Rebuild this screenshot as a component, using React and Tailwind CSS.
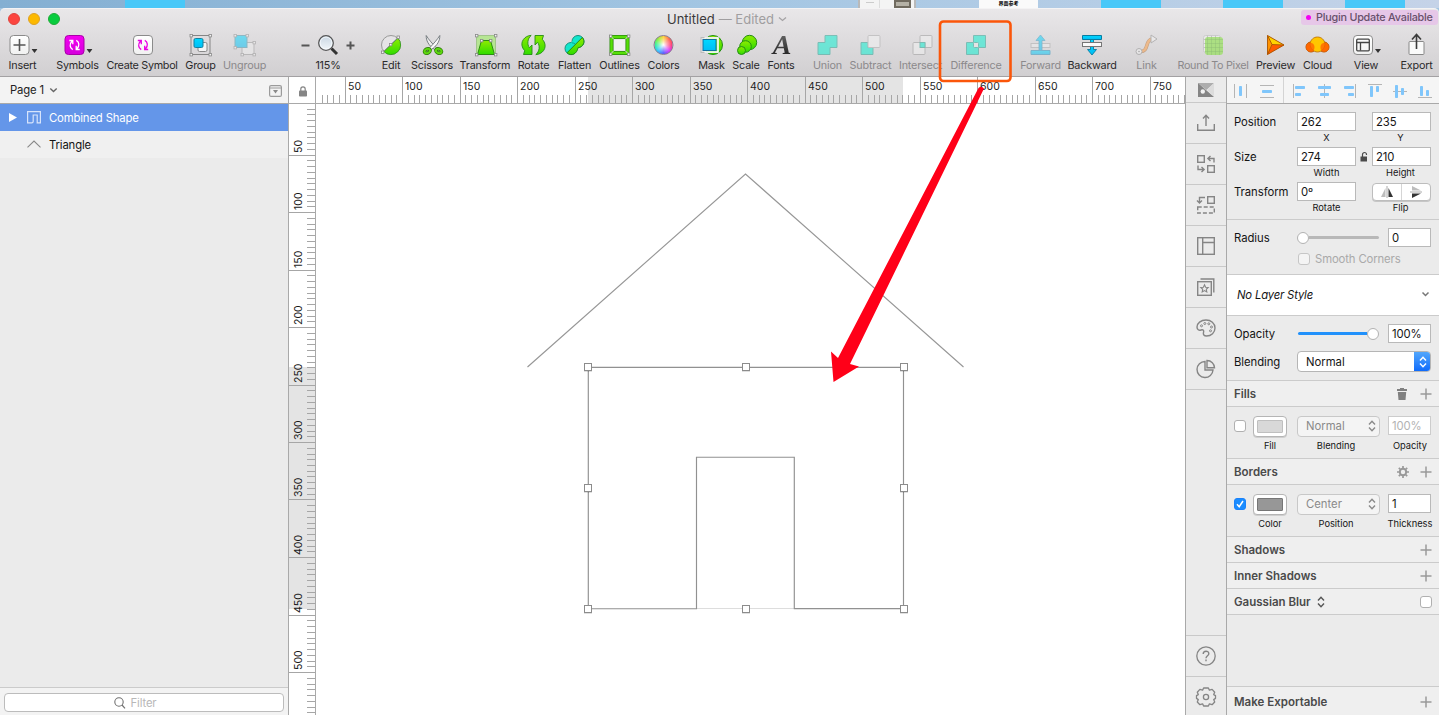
import React from "react";

const Svg = ({ w = 24, h = 24, className = "", children }) => (
  <svg width={w} height={h} viewBox={`0 0 ${w} ${h}`} fill="none" className={`shrink-0 overflow-visible ${className}`}>
    {children}
  </svg>
);

const Defs = () => (
  <svg width="0" height="0" className="absolute">
    <defs>
      <linearGradient id="green" x1="0" y1="0" x2="0" y2="1"><stop offset="0" stopColor="#8eec00" /><stop offset="1" stopColor="#2fdc00" /></linearGradient>
      <linearGradient id="blue" x1="0" y1="0" x2="0" y2="1"><stop offset="0" stopColor="#00d8ff" /><stop offset="1" stopColor="#00bdf5" /></linearGradient>
      <linearGradient id="paper" x1="0" y1="0" x2="0" y2="1"><stop offset="0" stopColor="#ffffff" /><stop offset="1" stopColor="#f1f1f1" /></linearGradient>
      <linearGradient id="pink" x1="0" y1="0" x2="0" y2="1"><stop offset="0" stopColor="#f400f0" /><stop offset="1" stopColor="#d400dc" /></linearGradient>
      <linearGradient id="ink" x1="0" y1="0" x2="0" y2="1"><stop offset="0" stopColor="#6a6a6a" /><stop offset="1" stopColor="#222" /></linearGradient>
      <linearGradient id="glass" x1="0" y1="0" x2="0" y2="1"><stop offset="0" stopColor="#c9d6e2" /><stop offset="1" stopColor="#f2f7fb" /></linearGradient>
    </defs>
  </svg>
);

const Corner = ({ x, y }) => <rect x={x - 1} y={y - 1} width="2.4" height="2.4" fill="#f4f4f4" stroke="#888" strokeWidth=".8" />;
const Tile = ({ fill = "url(#paper)", stroke = "#8b8b8b" }) => <rect x="2.5" y="2.5" width="19" height="19" rx="3.5" fill={fill} stroke={stroke} />;
const Cycle = ({ color }) => (
  <g stroke={color} strokeWidth="1.3">
    <path d="M10.200 16.600C7.300 15 6.600 11.300 9.600 8M6.800 7.500h3.500v3.700" />
    <path d="M13.800 7.400c2.900 1.600 3.600 5.300.6 8.600M17.200 16.500h-3.500v-3.700" />
  </g>
);

const icons = {
  insert: <Svg><Tile /><path d="M12 6v12M6 12h12" stroke="#555" strokeWidth="1.6" /></Svg>,
  symbols: <Svg><Tile fill="url(#pink)" stroke="#a800a8" /><Cycle color="#fff" /></Svg>,
  create: <Svg><Tile /><Cycle color="#ea00e4" /></Svg>,
  group: <Svg><rect x="2.500" y="2.500" width="19" height="19" stroke="#858585" /><rect x="9.5" y="9.5" width="9" height="9" rx="1.5" fill="#f4f4f4" stroke="#888" /><rect x="5.5" y="5.5" width="9" height="9" rx="1.5" fill="url(#blue)" stroke="#1481a0" /><Corner x={2.5} y={2.5} /><Corner x={21.5} y={2.5} /><Corner x={2.5} y={21.5} /><Corner x={21.5} y={21.5} /></Svg>,
  ungroup: <Svg><rect x="9.5" y="9.5" width="12" height="12" fill="#eee" stroke="#999" /><rect x="2.5" y="2.5" width="12" height="12" fill="url(#blue)" stroke="#3b93aa" />{[[2.5, 2.5], [14.5, 2.5], [2.5, 14.5], [21.5, 9.5], [9.5, 21.5], [21.5, 21.5]].map(([x, y]) => <Corner key={`${x}-${y}`} x={x} y={y} />)}</Svg>,
  edit: <Svg><circle cx="12" cy="12" r="9.5" fill="#e6e4e6" stroke="#999" /><path d="M19 5.2A9.5 9.5 0 1 1 4.8 18.5Z" fill="url(#green)" stroke="#2b9a12" strokeWidth=".8" /><path d="M19 4.5 3.5 19.5" stroke="#888" strokeWidth=".8" /><Corner x={19} y={4} /><Corner x={11.5} y={11.5} /><Corner x={3.5} y={19} /></Svg>,
  scissors: <Svg><path d="M5.2 2.500c-.2 4.800 2.200 10 8.500 14l1.400-2C11.700 11 8 7 5.200 2.500Z" fill="#eee" stroke="#6d7478" strokeWidth=".9" /><path d="M18.800 2.500c.2 4.800-2.200 10-8.500 14l-1.400-2C12.300 11 16 7 18.800 2.500Z" fill="#fafafa" stroke="#6d7478" strokeWidth=".9" /><ellipse cx="6.3" cy="18" rx="2.9" ry="2" transform="rotate(-25 6.3 18)" stroke="#2f7a0b" strokeWidth="3.6" /><ellipse cx="17.7" cy="18" rx="2.9" ry="2" transform="rotate(25 17.7 18)" stroke="#2f7a0b" strokeWidth="3.6" /><ellipse cx="6.3" cy="18" rx="2.9" ry="2" transform="rotate(-25 6.3 18)" stroke="#5ed810" strokeWidth="2" /><ellipse cx="17.7" cy="18" rx="2.9" ry="2" transform="rotate(25 17.7 18)" stroke="#5ed810" strokeWidth="2" /></Svg>,
  transform: <Svg><rect x="2.500" y="2.500" width="19" height="19" fill="#b6e593" stroke="#a1c58a" /><path d="M7.5 7.5h9L20.5 21.5h-17Z" fill="url(#green)" stroke="#2c8c12" /><Corner x={2.5} y={2.5} /><Corner x={21.5} y={2.5} /><Corner x={7.5} y={7.5} /><Corner x={16.5} y={7.5} /><Corner x={2.5} y={21.5} /><Corner x={21.5} y={21.5} /></Svg>,
  rotate: <Svg><path d="M9.700 2.400C3 2.600-1.700 9 1.300 15c.6 1.200 1.200 2 1.900 2.700L2 21.500h8.500V12l-2.600 2.700C5.500 11.500 5.800 5.500 9.700 2.400Z" fill="url(#green)" stroke="#248c15" strokeWidth=".9" /><path d="M14.300 21.600c6.700-.2 11.400-6.600 8.400-12.600-.6-1.200-1.200-2-1.900-2.700L22 2.500h-8.500V12l2.600-2.700c2.400 3.200 2.100 9.200-1.800 12.300Z" fill="url(#green)" stroke="#248c15" strokeWidth=".9" /></Svg>,
  flatten: <Svg><circle cx="15.500" cy="8.500" r="6" fill="#12e6cb" stroke="#15917f" /><circle cx="8.500" cy="15.500" r="6" fill="#12e6cb" stroke="#15917f" /><path d="M12.500 4.500 5 15l5-1 8-7Z" fill="#12e6cb" /><path d="M9.500 9.800c2.500.3 4 1.500 4.700 3.500" stroke="#15917f" strokeWidth=".8" /><path d="M19.800 4.500c3.500 4 1 9.500-4.300 10.300C14.500 20.500 9.300 24 4.500 19.800Z" fill="url(#green)" stroke="#278b17" /></Svg>,
  outlines: <Svg><rect x="4" y="4" width="16" height="16" stroke="#2f8e10" strokeWidth="4" /><rect x="4" y="4" width="16" height="16" stroke="#57df08" strokeWidth="2.400" /><rect x="6.500" y="6.500" width="11" height="11" fill="#f1f0f1" /><path d="M3 3l3 3M21 3l-3 3M3 21l3-3M21 21l-3-3" stroke="#fff" strokeWidth=".8" />{[[3, 3], [21, 3], [3, 21], [21, 21]].map(([x, y]) => <Corner key={`${x}-${y}`} x={x} y={y} />)}</Svg>,
  colors: (
    <div className="flex h-6 w-6 items-center justify-center">
      <div className="h-5 w-5 rounded-full border border-[#8a7b90] bg-[radial-gradient(circle,#fff_0%,rgba(255,255,255,0.5)_30%,transparent_65%),conic-gradient(from_90deg,#ff3c78,#d83cff,#5a5cff,#32c8ff,#32f0a0,#8cf03c,#ffd23c,#ff6450,#ff3c78)]" />
    </div>
  ),
  mask: <Svg><circle cx="13.5" cy="12" r="9.5" fill="url(#green)" stroke="#248c15" /><rect x="1.5" y="4.5" width="17" height="15" fill="#fff" fillOpacity=".25" stroke="#bbb" /><path d="M5 5h13.5v14H5" stroke="#fff" strokeWidth="1.5" /><rect x="3.5" y="6.5" width="13" height="11" fill="url(#blue)" stroke="#1171a0" /></Svg>,
  scale: <Svg><circle cx="14.5" cy="9.5" r="7.200" fill="url(#green)" stroke="#248c15" /><circle cx="10.5" cy="13.5" r="5.800" fill="url(#green)" stroke="#248c15" /><circle cx="6.5" cy="17.5" r="4" fill="url(#green)" stroke="#248c15" /></Svg>,
  fonts: <div className="flex h-6 w-8 items-center justify-center font-['Liberation_Serif',serif] text-[28px] font-bold italic leading-6"><span className="bg-gradient-to-b from-[#6a6a6a] to-[#222222] bg-clip-text px-[3px] text-transparent">A</span></div>,
  union: <Svg><path d="M9.5 2.5h12v12h-7v7h-12v-12h7Z" fill="#00f0d0" stroke="#1ca18f" /></Svg>,
  subtract: <Svg><path d="M2.5 9.5h7v5h5v7h-12Z" fill="#00f0d0" stroke="#1ca18f" /><rect x="9.5" y="2.5" width="12" height="12" rx="1" fill="#f4f4f4" stroke="#aaa" /></Svg>,
  intersect: <Svg><rect x="9.5" y="2.5" width="12" height="12" rx="1" fill="#f2f2f2" stroke="#999" /><rect x="2.5" y="9.5" width="12" height="12" rx="1" fill="#f2f2f2" stroke="#999" /><rect x="9.5" y="9.5" width="5" height="5" fill="#00f0d0" stroke="#1ca18f" /></Svg>,
  difference: <Svg><path d="M9.5 2.5h12v12h-7v7h-12v-12h7Z" fill="#00f0d0" stroke="#1ca18f" /><rect x="9.5" y="9.5" width="5" height="5" rx="1" fill="#eee" stroke="#1ca18f" /></Svg>,
  forward: <Svg><rect x="2.5" y="10.5" width="19" height="4" fill="#eee" stroke="#aaa" /><path d="M2.5 17.5h19v4h-19Z" fill="url(#blue)" stroke="#2290bd" /><path d="M12 2 16.500 7.500h-3v10h-3v-10H7.500Z" fill="url(#blue)" stroke="#2290bd" strokeWidth=".8" /></Svg>,
  backward: <Svg><path d="M2.5 2.5h19v4h-19Z" fill="url(#blue)" stroke="#087da1" /><path d="M12 22 7.5 16.5H10.500V6.5h3v10h3Z" fill="url(#blue)" stroke="#087da1" strokeWidth=".9" /><rect x="2.5" y="9.5" width="19" height="4" fill="#fafafa" stroke="#777" /></Svg>,
  link: <Svg><path d="M5 18.500c10 1 5-11.500 12.500-12.500" stroke="#a9682c" strokeWidth="3.6" /><path d="M5 18.500c10 1 5-11.500 12.500-12.500" stroke="#ff9a3c" strokeWidth="2.4" /><path d="M16.5 2 22.5 6l-6 4Z" fill="#f4f4f4" stroke="#888" /><circle cx="4.5" cy="18.5" r="3" fill="#f4f4f4" stroke="#888" /><circle cx="4.5" cy="18.5" r=".8" fill="#777" /></Svg>,
  pixel: <Svg><rect x="2.5" y="2.5" width="17" height="17" rx="2" fill="#f4f4f4" stroke="#bbb" /><rect x="4" y="4" width="18" height="18" rx="3" fill="#7be32a" /><path d="M6.5 4v18M10.500 4v18M14.5 4v18M18.5 4v18M4 6.5h18M4 10.5h18M4 14.5h18M4 18.5h18" stroke="#3f9a10" strokeOpacity=".5" strokeWidth=".8" /><path d="M6.500 2.500V4M10.500 2.500V4M14.500 2.500V4M2.500 6.500H4M2.500 10.500H4M2.500 14.500H4" stroke="#aaa" /></Svg>,
  preview: <Svg><path d="M4 2.5 20.5 12 4 21.5Z" fill="#ff9300" /><path d="M4 2.5 20.5 12 8.500 11.500Z" fill="#ffd200" /><path d="M4 21.5 20.5 12 8.500 12Z" fill="#ff5a00" /><path d="M4 2.5 20.5 12 4 21.5Z M4 2.5 8.5 11.5 4 21.5M8.5 11.5 20.5 12" stroke="#a95200" strokeWidth=".9" /></Svg>,
  cloud: <Svg w={26}><circle cx="19.5" cy="14" r="5" fill="#ff9000" stroke="#b85400" /><circle cx="6.5" cy="14" r="5" fill="#ff8500" stroke="#b85400" /><path d="M5.500 11.500C6 1.500 20 1.500 20.500 11.500c-.5 4-3.500 7.500-7.500 7.500s-7-3.500-7.500-7.500Z" fill="#ffc600" stroke="#b86b00" strokeWidth=".8" /><path d="M6.500 9.800c3.500.7 4.500 4.500 2.500 8.200-3 1.500-7 .5-7.500-3-.3-3 2-5.200 5-5.200ZM19.500 9.800c-3.500.7-4.500 4.500-2.500 8.200 3 1.500 7 .5 7.500-3 .3-3-2-5.200-5-5.200Z" fill="#ff5d00" fillOpacity=".75" /></Svg>,
  view: <Svg><Tile /><g stroke="#444" strokeWidth="1.3"><rect x="5.7" y="6.2" width="12.6" height="11.6" rx="1" /><path d="M5.7 9.5h12.6M9.5 9.5v8" /></g></Svg>,
  export: <Svg><rect x="4.5" y="8.5" width="15" height="13" rx="1" fill="#fafafa" stroke="#888" /><path d="M12 16V2M7.5 6.5 12 1.5l4.500 5" stroke="#3b3b3b" strokeWidth="1.6" /></Svg>,
};

const tools = [
  ["insert", "Insert", "ml-[9px] w-[27px]", "-translate-x-[3.5px]", 0, 1],
  ["symbols", "Symbols", "ml-[21px] w-[41px]", "-translate-x-[3.5px]", 0, 1],
  ["create", "Create Symbol", "ml-[9px] w-[70px]", "translate-x-px"],
  ["group", "Group", "ml-[9px] w-[29px]", "-translate-x-[0.5px]"],
  ["ungroup", "Ungroup", "ml-[9px] w-[41px]", "-translate-x-[0.5px]", 1],
  ["zoom", "115%", "ml-[37px] w-[52px]", ""],
  ["edit", "Edit", "ml-[27px] w-[20px]", ""],
  ["scissors", "Scissors", "ml-[11px] w-[40px]", "translate-x-px"],
  ["transform", "Transform", "ml-[9px] w-[48px]", "translate-x-px"],
  ["rotate", "Rotate", "ml-[9px] w-[31px]", "-translate-x-[0.5px]"],
  ["flatten", "Flatten", "ml-[9px] w-[33px]", "-translate-x-[0.5px]"],
  ["outlines", "Outlines", "ml-[9px] w-[39px]", "-translate-x-[0.5px]"],
  ["colors", "Colors", "ml-[9px] w-[31px]", "-translate-x-[0.5px]"],
  ["mask", "Mask", "ml-[20px] w-[25px]", "-translate-x-[0.5px]"],
  ["scale", "Scale", "ml-[9px] w-[26px]", "translate-x-px"],
  ["fonts", "Fonts", "ml-[9px] w-[26px]", "translate-x-px"],
  ["union", "Union", "ml-[20px] w-[27px]", "-translate-x-[0.5px]", 1],
  ["subtract", "Subtract", "ml-[9px] w-[41px]", "-translate-x-[0.5px]", 1],
  ["intersect", "Intersect", "ml-[9px] w-[41px]", "translate-x-[1.5px]", 1],
  ["difference", "Difference", "ml-[10px] w-[50px]", "", 1],
  ["forward", "Forward", "ml-[20px] w-[39px]", "-translate-x-[0.5px]", 1],
  ["backward", "Backward", "ml-[9px] w-[46px]", "", 0],
  ["link", "Link", "ml-[22px] w-[19px]", "-translate-x-[0.5px]", 1],
  ["pixel", "Round To Pixel", "ml-[22px] w-[70px]", "", 1],
  ["preview", "Preview", "ml-[9px] w-[37px]", "-translate-x-[0.5px]"],
  ["cloud", "Cloud", "ml-[10px] w-[27px]", "-translate-x-[0.5px]"],
  ["view", "View", "ml-[24px] w-[22px]", "-translate-x-[3px]", 0, 1],
  ["export", "Export", "ml-[24px] w-[31px]", "-translate-x-[0.5px]"],
];

const ZoomControl = () => (
  <div className="flex w-[54px] items-center justify-between">
    <Svg w={9} h={9}><path d="M.5 4.500h8" stroke="#555" strokeWidth="2" /></Svg>
    <Svg><circle cx="10" cy="10" r="7.3" fill="url(#glass)" stroke="#555" strokeWidth="1.3" /><circle cx="10" cy="10" r="5.9" stroke="#f8fbff" strokeOpacity=".8" /><path d="m15.500 15.500 5.500 5.500" stroke="#333" strokeWidth="3" /></Svg>
    <Svg w={9} h={9}><path d="M.5 4.500h8M4.500.5v8" stroke="#555" strokeWidth="2" /></Svg>
  </div>
);

const Tool = ({ item: [id, label, box, shift, off, menu] }) => (
  <div className={`flex shrink-0 flex-col items-center ${box}`}>
    <div className={`relative flex h-6 items-center ${off ? "opacity-50" : ""} ${shift}`}>
      {id === "zoom" ? <ZoomControl /> : icons[id]}
      {menu ? <svg width="6" height="4" className="absolute -right-[6px] bottom-[4px]"><path d="M0 0h6L3 4Z" fill="#333" /></svg> : null}
    </div>
    <div className={`mt-[1px] whitespace-nowrap text-[10.8px] leading-[15px] ${id === "create" || id === "pixel" ? "tracking-[-0.3px]" : "tracking-[-0.18px]"} ${off ? "text-[#8b898b]" : "text-[#2b2a2b]"}`}>{label}</div>
  </div>
);

const HRuler = () => {
  const ticks = [];
  for (let n = 30; n <= 780; n += 5) {
    const x = Math.floor(287.5 + n * 1.15) - 316;
    const major = n % 50 === 0;
    if (x < 869) ticks.push(<React.Fragment key={n}><rect x={x} y={major ? 0 : 18} width="1" height={major ? 26 : 8} fill="#a6a6a6" />{major && <text x={x + 3} y="13" fontSize="10.5" fill="#1c1c1c">{n}</text>}</React.Fragment>);
  }
  return <svg width="869" height="26" className="block font-['Inter']"><rect x="272" width="315" height="26" fill="#e4e4e4" />{ticks}</svg>;
};

const VRuler = () => {
  const ticks = [];
  for (let n = 10; n <= 535; n += 5) {
    const y = Math.floor(97.5 + n * 1.15) - 104;
    const major = n % 50 === 0;
    ticks.push(<React.Fragment key={n}><rect x={major ? 0 : 18} y={y} width={major ? 26 : 8} height="1" fill="#a6a6a6" />{major && <text transform={`translate(13 ${y - 2}) rotate(-90)`} fontSize="10.5" fill="#1c1c1c">{n}</text>}</React.Fragment>);
  }
  return <svg width="26" height="611" className="block font-['Inter']"><rect y="263" width="26" height="242" fill="#e4e4e4" />{ticks}</svg>;
};

const Artwork = () => (
  <svg width="869" height="611" viewBox="316 104 869 611" className="block" fill="none">
    <path d="M527.5 367 745.5 174 963.5 367" stroke="#979797" strokeWidth="1.15" />
    <path d="M696 608.5h98" stroke="#ddd" />
    <path d="M588.3 367.3h315.2v241.4H794.3V457.2h-97.8v151.5H588.3Z" stroke="#919191" strokeWidth="1.15" />
    {[[588, 367], [746, 367], [904, 367], [588, 488], [904, 488], [588, 609], [746, 609], [904, 609]].map(([x, y]) => (
      <g key={`${x}-${y}`}>
        <rect x={x - 4} y={y - 3} width="8" height="8" fill="#000" fillOpacity=".12" />
        <rect x={x - 3.5} y={y - 3.5} width="7" height="7" fill="#fff" stroke="#8c8c8c" />
      </g>
    ))}
  </svg>
);

const Rail = ({ children, className = "h-[41px]" }) => <div className={`flex items-center justify-center border-b border-[#c9c9c9] ${className}`}>{children}</div>;
const G = ({ children }) => <Svg w={20} h={20}><g stroke="#858585" strokeWidth="1.4">{children}</g></Svg>;

const SideRail = () => (
  <div className="flex w-10 shrink-0 flex-col bg-[#ebebeb]">
    <Rail className="h-[26px]"><Svg w={16} h={14}><path d="M0 0H16L8.500 7Z" fill="#adadad" /><path d="M0 0 16 14H0Z" fill="#858585" /><path d="M9.200 7.200 16 0v13Z" fill="#dcdcdc" /><circle cx="4.8" cy="8.5" r="2.2" fill="#f2f2f2" /></Svg></Rail>
    <Rail><G><path d="M1.7 11v6.300h16.600V11M10 13V2.500M7 5.500l3-3.200 3 3.200" /></G></Rail>
    <Rail><G><rect x="1.7" y="1.7" width="6.6" height="6.6" /><rect x="11.7" y="11.7" width="6.6" height="6.6" /><path d="M18 8.500v-4h-6M14.500 2l-2.600 2.500L14.500 7M2 11.500v4h6M5.500 13l2.600 2.500L5.500 18" /></G></Rail>
    <Rail><G><rect x="11.7" y="1.7" width="6.6" height="6.6" /><path d="M9 2.500H3.500V8M1 5.500 3.500 8 6 5.500" /><rect x="1.7" y="12" width="16.6" height="6" strokeDasharray="4 2" /></G></Rail>
    <Rail><G><rect x="1.7" y="1.7" width="16.6" height="16.6" /><path d="M6.700 1.700v16.600M6.700 6.500h11.600" /></G></Rail>
    <Rail><G><rect x="1.7" y="4.7" width="13.6" height="13.6" /><path d="M4.500 2h13.300v13.500" /><path d="m8.500 7.800 1.100 2.400 2.600.3-1.900 1.800.5 2.600-2.300-1.300-2.300 1.300.5-2.600-1.900-1.800 2.600-.3Z" strokeWidth="1.1" /></G></Rail>
    <Rail><G><path d="M10 2C4.800 2 1 5.300 1 9c0 2.600 2 3.700 4 3 2.200-.7 3.200.5 2.500 2.500-.6 2 .5 3.500 3 3.500 4.800 0 8.500-3.500 8.500-8C19 5.500 15 2 10 2Z" /><circle cx="5.500" cy="7.800" r="1" strokeWidth="1" /><circle cx="8.800" cy="5.500" r="1" strokeWidth="1" /><circle cx="12.800" cy="5.800" r="1" strokeWidth="1" /><circle cx="15.500" cy="9" r="1" strokeWidth="1" /><circle cx="14.500" cy="12.800" r="1" strokeWidth="1" /></G></Rail>
    <Rail><G><path d="M9 2.500A8 8 0 1 0 17 11H9Z" /><path d="M11 1.500V8.800h7.500c0-4-3.300-7.300-7.500-7.300Z" /></G></Rail>
    <div className="flex-1 border-b border-[#c9c9c9]" />
    <Rail><G><circle cx="10" cy="10" r="9.2" strokeWidth="1.3" /><path d="M7.200 8c0-3.800 5.600-3.600 5.600-.3 0 2-2.800 2.200-2.800 4.600M10 13.500v1.800" /></G></Rail>
    <div className="flex h-[38px] items-center justify-center pt-[2px]"><G><path d="M7.600 1h4.800l1 2.200 2.700-.8 2.600 2.900-1 2.300 1.800 1v2.800l-1.800 1.200 1 2.400-2.600 2.700-2.700-.9-1 2.200H7.600l-1-2.200-2.700.9-2.600-2.700 1-2.400-1.800-1.200V8.600l1.800-1-1-2.300 2.600-2.900 2.700.8Z" strokeLinejoin="round" strokeWidth="1.3" /><circle cx="10" cy="10" r="2.600" strokeWidth="1.3" /></G></div>
  </div>
);

const Field = ({ value, className = "w-[59px]", muted }) => <div className={`flex h-[19px] shrink-0 items-center border bg-white pl-[3px] pt-[2px] text-[11.3px] tracking-[-0.1px] ${muted ? "border-[#cccccc] text-[#b2b2b2]" : "border-[#b9b9b9] text-[#141414]"} ${className}`}>{value}</div>;
const Check = ({ on, off }) => (
  <div className={`flex h-3 w-3 shrink-0 items-center justify-center rounded-[3px] border ${on ? "border-[#1a82fb] bg-[#1a8cff]" : off ? "border-[#c6c6c6] bg-[#f4f4f4]" : "border-[#b0b0b0] bg-white"}`}>
    {on && <Svg w={8} h={8}><path d="m1 4.200 2.200 2.500L7 1" stroke="#fff" strokeWidth="1.5" /></Svg>}
  </div>
);
const Sub = ({ children, className }) => <div className={`flex h-4 shrink-0 items-center justify-center whitespace-nowrap text-[9.3px] text-[#161616] ${className}`}>{children}</div>;
const Label = ({ children }) => <div className="w-[63px] shrink-0 pt-[2px] text-[11.3px] tracking-[-0.05px] text-[#141414]">{children}</div>;
const Plus = () => <Svg w={12} h={12}><path d="M6 .5v11M.5 6h11" stroke="#9a9a9a" strokeWidth="1.5" /></Svg>;
const Head = ({ title, children, className = "h-[26px] border-b" }) => (
  <div className={`flex shrink-0 items-center justify-between border-[#cbcbcb] bg-[#efefef] pl-[7px] pr-[7px] text-[11.5px] font-semibold text-[#4a4a4a] ${className}`}>
    <span className="flex items-center gap-[6px]">{title}</span>
    <span className="flex items-center gap-3">{children}</span>
  </div>
);
const HeadText = ({ children }) => <span className="pt-[2px]">{children}</span>;
const UpDown = ({ color = "#777", w = 8 }) => <Svg w={w} h={12}><path d={`M1 4.500 ${w / 2} 1.200 ${w - 1} 4.500M1 7.500 ${w / 2} 10.800 ${w - 1} 7.500`} stroke={color} strokeWidth="1.4" /></Svg>;

const PaintRow = ({ on, swatch, select, value, muted, labels }) => (
  <div className="h-[52px] shrink-0 border-b border-[#cbcbcb] px-[7px] pt-2">
    <div className="flex h-[22px] items-center">
      <Check on={on} />
      <div className="ml-[7px] h-[21px] w-[34px] rounded-[4px] border border-[#b5b5b5] bg-white p-[3px] shadow-[0_1px_0_#cfcfcf]"><div className={`h-full w-full rounded-[1px] border ${swatch}`} /></div>
      <div className="ml-[10px] flex h-[21px] w-[83px] items-center justify-between rounded-[4px] border border-[#c8c8c8] bg-[#f4f4f4] pl-2 pr-[3px] text-[11.3px] text-[#8a8a8a]"><span className="pt-px">{select}</span><UpDown color="#8a8a8a" /></div>
      <Field value={value} muted={muted} className="-mt-px ml-2 w-[43px]" />
    </div>
    <div className="flex pt-px">
      <Sub className="ml-[15px] w-[42px]">{labels[0]}</Sub><Sub className="ml-[3px] w-[84px]">{labels[1]}</Sub><Sub className="ml-[7px] w-[50px]">{labels[2]}</Sub>
    </div>
  </div>
);

const B = "#80c6fb";
const aligns = [
  <><path d="M1.5 1v14M13.5 1v14" stroke="#b5b5b5" /><rect x="6" y="3" width="3" height="10" rx=".8" fill={B} /></>,
  <><path d="M1 2.5h14M1 14.5h14" stroke="#b5b5b5" /><rect x="3" y="7" width="10" height="3" rx=".8" fill={B} /></>,
  <><path d="M2.5 1v14" stroke="#b5b5b5" /><rect x="4" y="3" width="10" height="3" rx=".8" fill={B} /><rect x="4" y="10" width="6" height="3" rx=".8" fill={B} /></>,
  <><path d="M8.5 1v14" stroke="#b5b5b5" /><rect x="2" y="3" width="13" height="3" rx=".8" fill={B} /><rect x="4" y="10" width="9" height="3" rx=".8" fill={B} /></>,
  <><path d="M14.5 1v14" stroke="#b5b5b5" /><rect x="3" y="3" width="10" height="3" rx=".8" fill={B} /><rect x="7" y="10" width="6" height="3" rx=".8" fill={B} /></>,
  <><path d="M2 1.5h14" stroke="#b5b5b5" /><rect x="4" y="3" width="3" height="11" rx=".8" fill={B} /><rect x="10" y="3" width="3" height="6" rx=".8" fill={B} /></>,
  <><path d="M2 8.5h14" stroke="#b5b5b5" /><rect x="4" y="2" width="3" height="13" rx=".8" fill={B} /><rect x="10" y="5" width="3" height="7" rx=".8" fill={B} /></>,
  <><path d="M2 14.5h14" stroke="#b5b5b5" /><rect x="4" y="3" width="3" height="10" rx=".8" fill={B} /><rect x="10" y="7" width="3" height="6" rx=".8" fill={B} /></>,
];

const Inspector = () => (
  <div className="flex w-[212px] shrink-0 flex-col bg-[#ebebeb]">
    <div className="flex h-[27px] shrink-0 items-center border-b border-[#a9a9a9] bg-[#f5f5f5]">
      <div className="flex items-center gap-[10px] pl-[6px] pt-px">{aligns.slice(0, 2).map((a, i) => <Svg key={i} w={16} h={16}>{a}</Svg>)}</div>
      <div className="ml-[8px] mr-[4px] h-full w-px bg-[#d4d4d4]" />
      <div className="flex items-center gap-[9px] pl-[3px] pt-px">{aligns.slice(2).map((a, i) => <Svg key={i} w={16} h={16}>{a}</Svg>)}</div>
    </div>
    <div className="h-[116px] shrink-0 border-b border-[#cbcbcb] px-[7px] pt-2">
      {[["Position", "262", "235", "X", "Y"], ["Size", "274", "210", "Width", "Height"], ["Transform", "0º", null, "Rotate", "Flip"]].map((r) => (
        <div key={r[0]}>
          <div className="flex h-[19px] items-center">
            <Label>{r[0]}</Label>
            <Field value={r[1]} />
            <div className="flex w-4 shrink-0 justify-center">{r[0] === "Size" && <Svg w={8} h={10}><rect x=".5" y="4.500" width="6.5" height="5" fill="#4a4a4a" /><path d="M2.500 5V2.500a1.800 1.800 0 0 1 4 0V3" stroke="#4a4a4a" strokeWidth="1.2" /></Svg>}</div>
            {r[2] ? <Field value={r[2]} /> : (
              <div className="flex h-[18px] w-[59px] shrink-0 items-center rounded-[4px] border border-[#bdbdbd] bg-white shadow-[0_1px_0_#c6c6c6]">
                <div className="flex h-full flex-1 items-center justify-center border-r border-[#d5d5d5]"><Svg w={14} h={12}><path d="M5.500 2v9H1Z" fill="#bdbdbd" /><path d="M7 0v12" stroke="#aaa" /><path d="M8.500 2v9H13Z" fill="#333" /></Svg></div>
                <div className="flex h-full flex-1 items-center justify-center"><Svg w={14} h={14}><path d="M3 1v4.500h9Z" fill="#bdbdbd" /><path d="M1 7h12" stroke="#aaa" /><path d="M3 13V8.500h9Z" fill="#333" /></Svg></div>
              </div>
            )}
          </div>
          <div className="flex h-4"><Sub className="-mt-px ml-[63px] w-[59px]">{r[3]}</Sub><Sub className="-mt-px ml-[15px] w-[59px]">{r[4]}</Sub></div>
        </div>
      ))}
    </div>
    <div className="h-[55px] shrink-0 border-b border-[#cbcbcb] px-[7px] pt-2">
      <div className="flex h-[19px] items-center">
        <Label>Radius</Label>
        <div className="flex w-[82px] items-center"><div className="h-3 w-3 rounded-full border border-[#b2b2b2] bg-white" /><div className="h-[3px] flex-1 rounded-r-full bg-[#b8b8b8]" /></div>
        <Field value="0" className="ml-[9px] w-[43px]" />
      </div>
      <div className="ml-16 mt-[6px] flex h-3 items-center gap-[5px] text-[11.3px] tracking-[-0.12px] text-[#a9a9a9]"><Check off /><span className="pt-px">Smooth Corners</span></div>
    </div>
    <div className="flex h-[41px] shrink-0 items-center justify-between border-b border-[#cbcbcb] bg-white pl-[10px] pr-[9px] text-[11.3px] tracking-[-0.18px] italic text-[#141414]"><span className="pt-px">No Layer Style</span><Svg w={9} h={7} className="-mt-[2px]"><path d="m1.500 1.500 3 3 3-3" stroke="#777" strokeWidth="1.5" /></Svg></div>
    <div className="h-[65px] shrink-0 border-b border-[#cbcbcb] px-[7px] pt-2">
      <div className="flex h-[19px] items-center">
        <Label>Opacity</Label>
        <div className="flex w-[82px] items-center pl-px"><div className="h-[3px] w-[70px] rounded-l-full bg-[#2191fb]" /><div className="h-3 w-3 rounded-full border border-[#b2b2b2] bg-white" /></div>
        <Field value="100%" className="ml-[9px] w-[43px]" />
      </div>
      <div className="mt-2 flex h-[21px] items-center">
        <Label>Blending</Label>
        <div className="flex h-[21px] w-[134px] items-center justify-between overflow-hidden rounded-[4px] border border-[#b5b5b5] bg-white pl-2 text-[11.3px] text-[#141414]"><span className="pt-px">Normal</span><div className="-my-px -mr-px flex h-[21px] w-[17px] items-center justify-center bg-gradient-to-b from-[#55a9fb] to-[#0a67fb]"><UpDown color="#fff" /></div></div>
      </div>
    </div>
    <Head title={<HeadText>Fills</HeadText>}><Svg w={12} h={12}><path d="M4 0h4v1h3v2H1V1h3ZM1.800 4h8.400l-.7 8h-7Z" fill="#808080" /></Svg><Plus /></Head>
    <PaintRow swatch="border-[#bfbfbf] bg-[#d8d8d8]" select="Normal" value="100%" muted labels={["Fill", "Blending", "Opacity"]} />
    <Head title={<HeadText>Borders</HeadText>}><Svg w={12} h={12} className="translate-x-px"><circle cx="6" cy="6" r="3.2" stroke="#999" strokeWidth="2" /><path d="M6 0v2.500M6 9.500V12M0 6h2.500M9.500 6H12M1.800 1.800l1.700 1.700M8.500 8.500l1.700 1.700M10.200 1.800 8.500 3.500M3.500 8.500l-1.700 1.700" stroke="#999" strokeWidth="1.7" /></Svg><Plus /></Head>
    <PaintRow on swatch="border-[#767676] bg-[#979797]" select="Center" value="1" labels={["Color", "Position", "Thickness"]} />
    <Head title={<HeadText>Shadows</HeadText>}><Plus /></Head>
    <Head title={<HeadText>Inner Shadows</HeadText>}><Plus /></Head>
    <Head title={<><HeadText>Gaussian Blur</HeadText><UpDown color="#555" /></>}><Check /></Head>
    <div className="flex-1" />
    <Head title={<HeadText>Make Exportable</HeadText>} className="h-[29px] border-t pt-[2px]"><Plus /></Head>
  </div>
);

export default function App() {
  return (
    <div className="relative flex h-[715px] w-[1439px] flex-col overflow-hidden bg-[#a2c4e0] font-['Inter','Liberation_Sans',sans-serif]">
      <Defs />
      <div className="flex h-2 shrink-0 bg-gradient-to-r from-[#84afd2] via-[#a3c6e3] to-[#c5d3e8]">
        <div className="ml-[125px] h-full w-[60px] bg-[#48c8f8]" />
        <div className="ml-[673px] flex h-full w-[58px] border-x-2 border-[#b9b9b9] bg-[#f4f4f4]"><div className="ml-[6px] mt-[2px] h-px w-2 bg-[#ccc]" /><div className="ml-[5px] h-full w-px bg-[#ddd]" /><div className="ml-[14px] h-full w-[17px] border-2 border-[#706a5f] bg-[#b5b1a6]" /></div>
        <div className="ml-[63px] h-full w-[59px] overflow-hidden bg-[#fafafa] text-center font-['Noto_Sans_CJK_SC'] text-[5px] font-bold leading-[5px] text-black">界面参考</div>
        <div className="ml-[63px] h-full w-[60px] bg-[#48c8f8]" />
        <div className="ml-[62px] h-full w-[60px] bg-[#48c8f8]" />
        <div className="ml-[62px] h-full w-[60px] bg-[#48c8f8]" />
      </div>
      <div className="h-[69px] shrink-0 rounded-t-[5px] border-b border-t border-b-[#a3a1a3] border-t-[#f4f3f4] bg-gradient-to-b from-[#e9e7e9] to-[#d1cfd1]">
        <div className="grid h-6 grid-cols-[667px_634px_137px]">
          <div className="flex gap-2 pl-2 pt-1">
            <div className="h-3 w-3 rounded-full border border-[#e0443e] bg-[#fc4540]" /><div className="h-3 w-3 rounded-full border border-[#dfa123] bg-[#fdb900]" /><div className="h-3 w-3 rounded-full border border-[#1fab37] bg-[#08cc3e]" />
          </div>
          <div className="flex h-[21px] items-center whitespace-nowrap text-[13px] text-[#3b3a3b]">Untitled<span className="ml-1 text-[#a09ea0]">— Edited</span><Svg w={9} h={7} className="ml-1"><path d="m1 1.500 3.500 3L8 1.500" stroke="#a5a3a5" strokeWidth="1.3" /></Svg></div>
          <div className="mt-px flex h-[15px] items-center rounded-[3px] bg-[#e6c7e8] pl-[5px] text-[10.8px] font-medium tracking-[-0.22px] text-[#66506b]"><span className="mr-[5px] h-[5px] w-[5px] shrink-0 rounded-full bg-[#f400f4]" /><span className="whitespace-nowrap pt-px">Plugin Update Available</span></div>
        </div>
        <div className="flex">{tools.map((t) => <Tool key={t[0]} item={t} />)}</div>
      </div>
      <div className="flex min-h-0 flex-1">
        <div className="flex w-[289px] shrink-0 flex-col border-r border-[#a9a9a9] bg-[#ebebeb] tracking-[-0.14px]">
          <div className="flex h-[27px] shrink-0 items-center border-b border-[#a9a9a9] bg-[#f3f3f3] pl-[10px] pr-[6px] text-[11.3px] text-[#222]">
            <span className="pt-px">Page 1</span><Svg w={9} h={7} className="ml-[5px]"><path d="m1.300 1.500 3.200 3 3.200-3" stroke="#666" strokeWidth="1.4" /></Svg>
            <Svg w={13} h={12} className="ml-auto mt-px"><rect x=".6" y=".6" width="11.8" height="10.8" rx="1.5" stroke="#9b9b9b" strokeWidth="1.2" /><path d="M1 3h11" stroke="#9b9b9b" /><path d="M4 5h5L6.500 8.500Z" fill="#8a8a8a" /></Svg>
          </div>
          <div className="flex h-[27px] shrink-0 items-center bg-[#6496e9] pl-[9px] text-[11.3px] text-white">
            <Svg w={8} h={9}><path d="M0 0 8 4.500 0 9Z" fill="#fff" /></Svg>
            <Svg w={14} h={13} className="ml-[10px]"><path d="M.6 .6h12.800v11.300h-3.200V4H6.200v6.500q0 1.400-1.500 1.400H.6Z" stroke="#d7e4fb" strokeWidth="1.2" /></Svg><span className="ml-2 pt-[2px]">Combined Shape</span>
          </div>
          <div className="flex h-[27px] shrink-0 items-center bg-[#f0f0f0] pl-[27px] text-[11.3px] text-[#141414]"><Svg w={14} h={8} className="-mt-[2px]"><path d="M.5 7.300 7 1l6.500 6.300" stroke="#888" strokeWidth="1.1" /></Svg><span className="ml-2 pt-[2px]">Triangle</span></div>
          <div className="flex-1" />
          <div className="h-7 shrink-0 border-t border-[#cbcbcb] bg-[#f3f3f3] px-1 pt-[5px]"><div className="flex h-[19px] items-center justify-center rounded-[4px] border border-[#bcbcbc] bg-white pr-[18px] text-[11.3px] text-[#b8b8b8]"><Svg w={12} h={12} className="mr-[5px]"><circle cx="5" cy="5" r="4.2" stroke="#707070" strokeWidth="1.1" /><path d="m8 8 3 3.300" stroke="#707070" strokeWidth="1.2" /></Svg><span className="pt-[2px]">Filter</span></div></div>
        </div>
        <div className="grid w-[897px] shrink-0 grid-cols-[27px_869px] grid-rows-[27px_611px] border-r border-[#a9a9a9] bg-white">
          <div className="flex items-center justify-center border-b border-r border-[#a9a9a9]"><Svg w={8} h={11} className="ml-px mt-[2px]"><rect y="4.500" width="8" height="6" rx=".8" fill="#858585" /><path d="M1.800 5V3a2.200 2.200 0 0 1 4.400 0v2" stroke="#858585" strokeWidth="1.2" /></Svg></div>
          <div className="border-b border-[#a9a9a9]"><HRuler /></div>
          <div className="border-r border-[#a9a9a9]"><VRuler /></div>
          <Artwork />
        </div>
        <SideRail />
        <div className="w-px shrink-0 bg-[#a9a9a9]" />
        <Inspector />
      </div>
      <svg width="190" height="370" viewBox="825 18 190 370" className="absolute left-[825px] top-[18px]" fill="none">
        <rect x="940" y="21.5" width="70.5" height="59.5" rx="3.5" stroke="#fb560a" strokeWidth="2.6" />
        <path d="M978.500 88Q981.500 85.500 984 88.500L850 364 859 366.500 833.500 382 831 351.500 838 358Z" fill="#ff0018" />
      </svg>
    </div>
  );
}
